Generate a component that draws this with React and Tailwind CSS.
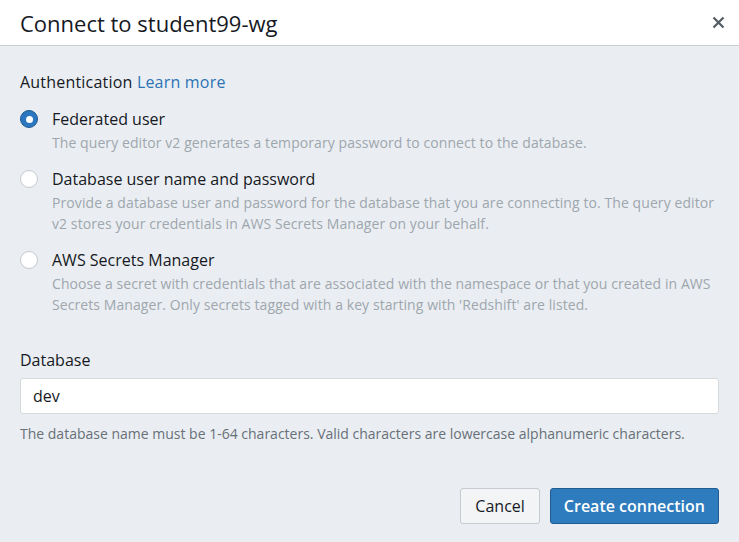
import React, { useState } from "react";

const options = [
  {
    id: "federated",
    title: "Federated user",
    desc: "The query editor v2 generates a temporary password to connect to the database.",
  },
  {
    id: "dbuser",
    title: "Database user name and password",
    desc: "Provide a database user and password for the database that you are connecting to. The query editor v2 stores your credentials in AWS Secrets Manager on your behalf.",
  },
  {
    id: "secrets",
    title: "AWS Secrets Manager",
    desc: "Choose a secret with credentials that are associated with the namespace or that you created in AWS Secrets Manager. Only secrets tagged with a key starting with 'Redshift' are listed.",
  },
];

function Radio({ checked }) {
  return checked ? (
    <span className="flex h-[18px] w-[18px] shrink-0 items-center justify-center rounded-full border-[1.5px] border-[#1b5a94] bg-[#2b78c0]">
      <span className="block h-[7px] w-[7px] rounded-full bg-white" />
    </span>
  ) : (
    <span className="block h-[18px] w-[18px] shrink-0 rounded-full border border-[#c4c9cf] bg-white" />
  );
}

export default function App() {
  const [auth, setAuth] = useState("federated");
  const [db, setDb] = useState("dev");

  return (
    <div className="flex h-[542px] w-[739px] flex-col bg-[#eaeef2] font-['Open_Sans',sans-serif] text-[#16191f]">
      {/* Header */}
      <div className="flex h-[46px] shrink-0 items-center justify-between border-b border-[#c9cdd2] bg-white pl-5 pr-[14px]">
        <h1 className="text-[22px] leading-none">Connect to student99-wg</h1>
        <button className="text-[#545b64]">
          <svg width="13" height="13" viewBox="0 0 13 13">
            <path d="M1.5 1.5L11.5 11.5M11.5 1.5L1.5 11.5" stroke="currentColor" strokeWidth="2.2" />
          </svg>
        </button>
      </div>

      {/* Body */}
      <div className="flex flex-col px-5 pt-[24px]">
        <div className="text-[16px] leading-[24px] tracking-[0.2px]">
          Authentication <a className="text-[#2d73b4]">Learn more</a>
        </div>

        <div className="mt-[13px] flex flex-col gap-[14px]">
          {options.map((o) => (
            <label
              key={o.id}
              className="flex cursor-pointer gap-[14px]"
              onClick={() => setAuth(o.id)}
            >
              <div className="pt-[3px]">
                <Radio checked={auth === o.id} />
              </div>
              <div className="flex flex-col">
                <span className="text-[16px] leading-[24px]">{o.title}</span>
                <span className="mt-[1px] text-[14px] leading-[21px] tracking-[0.08px] text-[#9ea6ae]">
                  {o.desc}
                </span>
              </div>
            </label>
          ))}
        </div>

        <div className="mt-[33px] text-[16px] leading-[24px]">Database</div>
        <input
          value={db}
          onChange={(e) => setDb(e.target.value)}
          className="mt-[6px] h-[36px] w-full rounded-[3px] border border-[#d5dbdb] bg-white px-3 text-[16px] outline-none"
        />
        <p className="mt-[10px] text-[14px] leading-[20px] text-[#687078]">
          The database name must be 1-64 characters. Valid characters are lowercase alphanumeric characters.
        </p>

        <div className="mt-[44px] flex justify-end gap-[10px]">
          <button className="h-[36px] rounded-[3px] border border-[#c5cbd1] bg-[#f2f4f6] px-[14px] text-[16px] text-[#16191f]">
            Cancel
          </button>
          <button className="h-[36px] rounded-[3px] border border-[#1f5c92] bg-[#2e7bbe] px-[13px] text-[16px] font-semibold text-white">
            Create connection
          </button>
        </div>
      </div>
    </div>
  );
}
